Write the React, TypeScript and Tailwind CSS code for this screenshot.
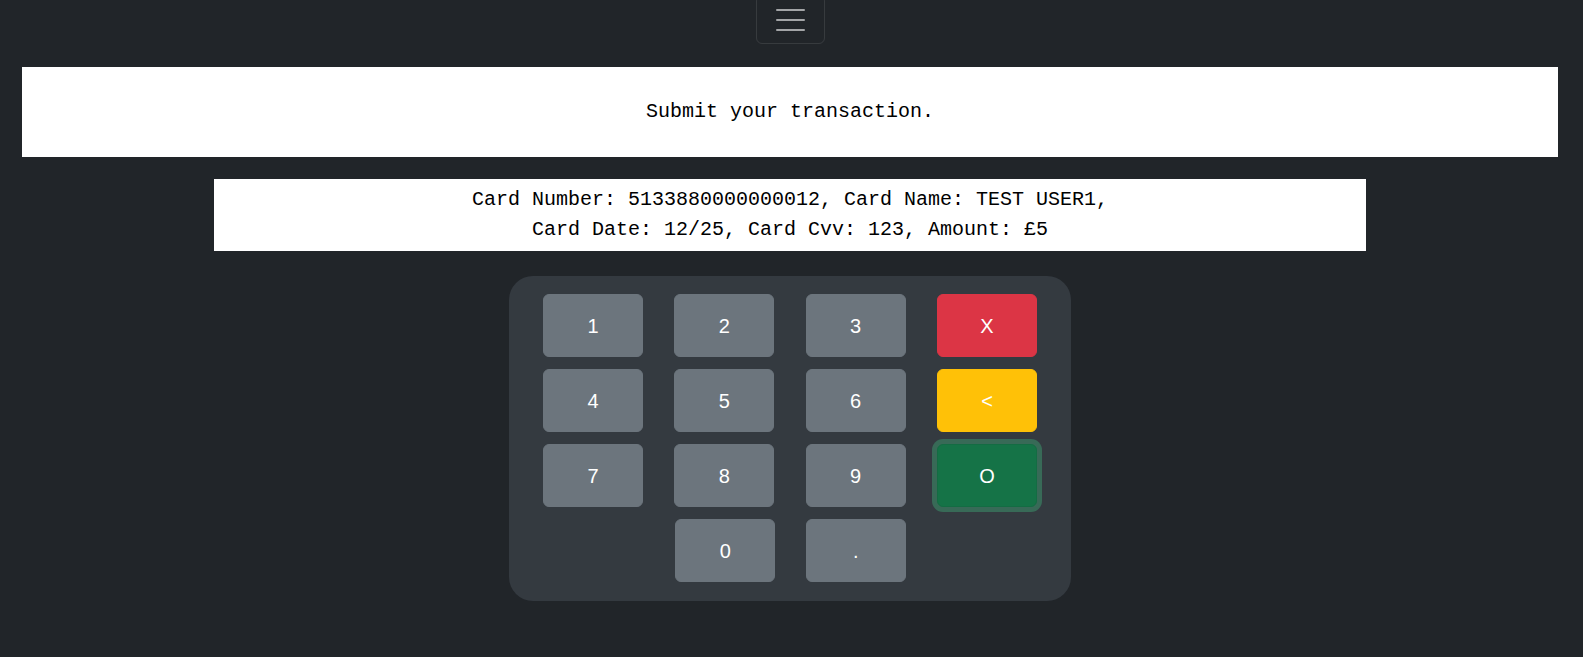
import React from "react";

const mono = { fontFamily: '"Liberation Mono", "DejaVu Sans Mono", monospace' };

function Key({ label, cls }: { label: string; cls: string }) {
  return (
    <button
      className={`h-[63px] w-[100px] rounded-[6px] text-[20px] leading-[30px] text-white ${cls}`}
      style={{ fontFamily: '"Liberation Sans", Arial, sans-serif' }}
    >
      {label}
    </button>
  );
}

export default function App() {
  const gray = "bg-[#6c757d] border border-[#6c757d]";
  return (
    <div className="min-h-[657px] w-full bg-[#212529] overflow-hidden">
      <div className="w-[1580px] flex flex-col items-center">
        <div className="mt-[-5px] h-[49px] w-[69px] rounded-[6px] border border-[rgba(255,255,255,0.1)] flex flex-col items-center justify-center gap-[8px]">
          <div className="h-[2px] w-[29px] rounded-[1px] bg-[#a3a5a7]" />
          <div className="h-[2px] w-[29px] rounded-[1px] bg-[#a3a5a7]" />
          <div className="h-[2px] w-[29px] rounded-[1px] bg-[#a3a5a7]" />
        </div>

        <div className="mt-[23px] w-[1536px] bg-white py-[30px] text-center text-[20px] leading-[30px] text-black" style={mono}>
          Submit your transaction.
        </div>

        <div className="mt-[22px] w-[1152px] bg-white py-[6px] text-center text-[20px] leading-[30px] text-black" style={mono}>
          Card Number: 5133880000000012, Card Name: TEST USER1,
          <br />
          Card Date: 12/25, Card Cvv: 123, Amount: £5
        </div>

        <div className="mt-[25px] w-[562px] rounded-[24px] bg-[#343a40] pt-[18px] pb-[19px] px-[34px]">
          <div className="grid grid-cols-[100px_100px_100px_100px] justify-between gap-y-[12px]">
            <Key label="1" cls={gray} />
            <Key label="2" cls={gray} />
            <Key label="3" cls={gray} />
            <Key label="X" cls="bg-[#dc3545] border border-[#dc3545]" />
            <Key label="4" cls={gray} />
            <Key label="5" cls={gray} />
            <Key label="6" cls={gray} />
            <Key label="<" cls="bg-[#ffc107] border border-[#ffc107]" />
            <Key label="7" cls={gray} />
            <Key label="8" cls={gray} />
            <Key label="9" cls={gray} />
            <Key label="O" cls="bg-[#157347] border border-[#146c43] shadow-[0_0_0_5px_rgba(60,153,110,0.5)]" />
            <div />
            <div className="ml-[1px]"><Key label="0" cls={gray} /></div>
            <Key label="." cls={gray} />
            <div />
          </div>
        </div>
      </div>
    </div>
  );
}
